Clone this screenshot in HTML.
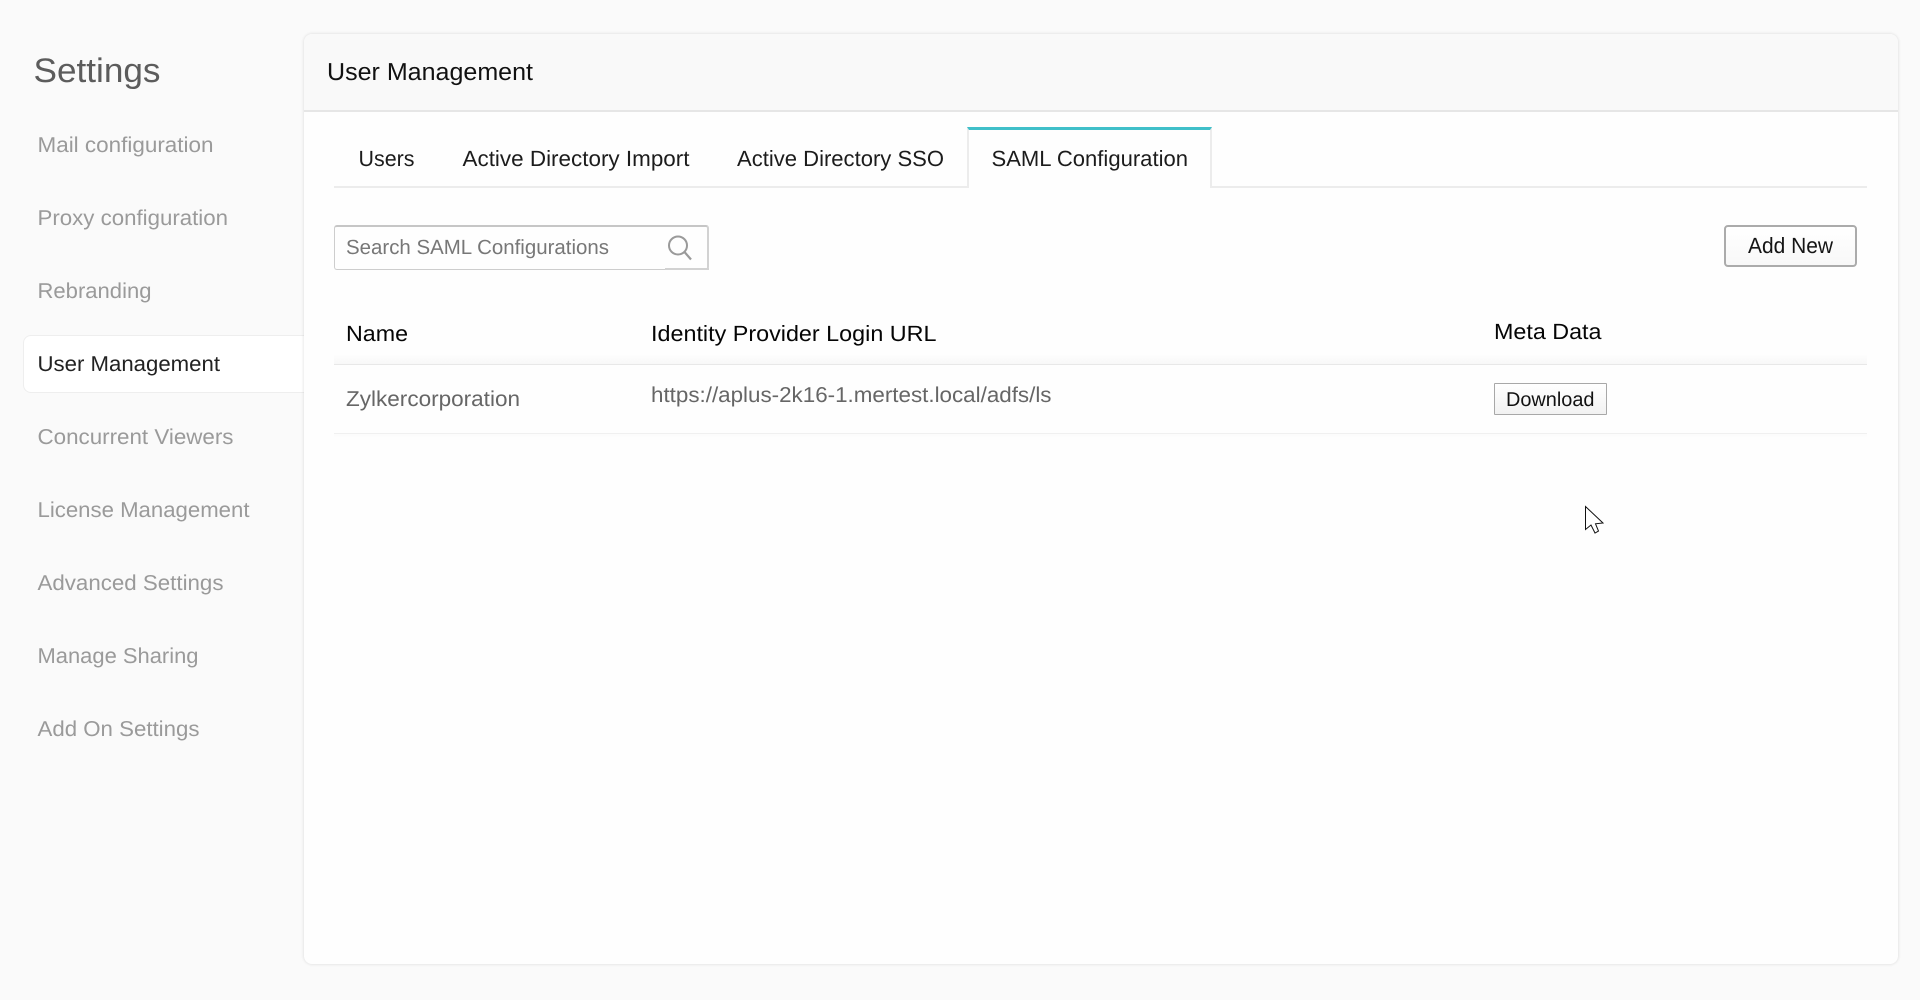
<!DOCTYPE html>
<html lang="en">
<head>
<meta charset="utf-8">
<title>Settings - User Management</title>
<style>
html,body{margin:0;padding:0;width:1920px;height:1000px;overflow:hidden;background:#fafafa;}
.b{position:absolute;box-sizing:border-box;}
svg{position:absolute;left:0;top:0;}
text{font-family:"Liberation Sans",sans-serif;text-rendering:geometricPrecision;}
.m{font-size:21.5px;fill:#9a9a9a;}
.t{font-size:22px;fill:#1c1c1c;}
.h{font-size:22px;fill:#050505;}
</style>
</head>
<body>
<!-- active sidebar pill -->
<div class="b" style="left:23px;top:335px;width:291px;height:58px;background:#fff;border:1px solid #eee;border-right:0;border-radius:8px 0 0 8px;"></div>
<!-- card -->
<div class="b" style="left:304px;top:34px;width:1594px;height:930px;background:#fefefe;border-radius:8px;box-shadow:0 0 3px rgba(0,0,0,.14);"></div>
<div class="b" style="left:304px;top:34px;width:1594px;height:78px;background:#f9f9f9;border-bottom:2px solid #e6e6e6;border-radius:8px 8px 0 0;"></div>
<!-- tabs -->
<div class="b" style="left:334px;top:186px;width:1533px;height:2px;background:#ececec;"></div>
<div class="b" style="left:967px;top:127px;width:245px;height:61px;background:#fefefe;border:2px solid #ececec;border-top:3px solid #3fbfc9;border-bottom:0;"></div>
<!-- search -->
<div class="b" style="left:334px;top:225px;width:375px;height:45px;border:1px solid #cdcdcd;border-top:2px solid #c6c6c6;border-right:2px solid #d2d2d2;border-radius:3px;"></div>
<div class="b" style="left:665px;top:268px;width:44px;height:2px;background:#d2d2d2;"></div>
<!-- add new -->
<div class="b" style="left:1724px;top:225px;width:133px;height:42px;background:linear-gradient(#fff,#f8f8f8);border:2px solid #ababab;border-radius:4px;"></div>
<!-- table -->
<div class="b" style="left:334px;top:354px;width:1533px;height:10px;background:linear-gradient(#fefefe,#f8f8f8);"></div>
<div class="b" style="left:334px;top:364px;width:1533px;height:1px;background:#e8e8e8;"></div>
<div class="b" style="left:334px;top:433px;width:1533px;height:1px;background:#f0f0f0;"></div>
<div class="b" style="left:334px;top:434px;width:1533px;height:4px;background:linear-gradient(#fbfbfb,#fefefe);"></div>
<div class="b" style="left:1494px;top:383px;width:113px;height:32px;background:linear-gradient(#fff,#f2f2f2);border:1px solid #a8a8a8;border-radius:1px;"></div>

<svg width="1920" height="1000" viewBox="0 0 1920 1000" xmlns="http://www.w3.org/2000/svg">
<text x="33.5" y="82" font-size="34" fill="#5c5c5c" textLength="127" lengthAdjust="spacingAndGlyphs">Settings</text>
<text class="m" x="37.5" y="152" textLength="176" lengthAdjust="spacingAndGlyphs">Mail configuration</text>
<text class="m" x="37.5" y="225" textLength="190.5" lengthAdjust="spacingAndGlyphs">Proxy configuration</text>
<text class="m" x="37.5" y="298" textLength="114" lengthAdjust="spacingAndGlyphs">Rebranding</text>
<text class="m" x="37.5" y="371" textLength="182.5" lengthAdjust="spacingAndGlyphs" style="fill:#222">User Management</text>
<text class="m" x="37.5" y="444" textLength="196" lengthAdjust="spacingAndGlyphs">Concurrent Viewers</text>
<text class="m" x="37.5" y="517" textLength="212" lengthAdjust="spacingAndGlyphs">License Management</text>
<text class="m" x="37.5" y="590" textLength="186" lengthAdjust="spacingAndGlyphs">Advanced Settings</text>
<text class="m" x="37.5" y="663" textLength="161" lengthAdjust="spacingAndGlyphs">Manage Sharing</text>
<text class="m" x="37.5" y="736" textLength="162" lengthAdjust="spacingAndGlyphs">Add On Settings</text>

<text x="327" y="80" font-size="24.5" fill="#111" textLength="206" lengthAdjust="spacingAndGlyphs">User Management</text>

<text class="t" x="358.5" y="166" textLength="56" lengthAdjust="spacingAndGlyphs">Users</text>
<text class="t" x="462.5" y="166" textLength="227" lengthAdjust="spacingAndGlyphs">Active Directory Import</text>
<text class="t" x="737" y="166" textLength="207" lengthAdjust="spacingAndGlyphs">Active Directory SSO</text>
<text class="t" x="991.5" y="166" textLength="196.5" lengthAdjust="spacingAndGlyphs">SAML Configuration</text>

<text x="346" y="254" font-size="20.5" fill="#777" textLength="263" lengthAdjust="spacingAndGlyphs">Search SAML Configurations</text>
<circle cx="678" cy="245.5" r="9" fill="none" stroke="#9a9a9a" stroke-width="2"/>
<path d="M684.5 252 L691 259.5" fill="none" stroke="#9a9a9a" stroke-width="2.2"/>

<text x="1748" y="253" font-size="22" fill="#151515" textLength="85" lengthAdjust="spacingAndGlyphs">Add New</text>

<text class="h" x="346" y="341" textLength="62" lengthAdjust="spacingAndGlyphs">Name</text>
<text class="h" x="651" y="341" textLength="285.5" lengthAdjust="spacingAndGlyphs">Identity Provider Login URL</text>
<text class="h" x="1494" y="339" textLength="107.5" lengthAdjust="spacingAndGlyphs">Meta Data</text>

<text x="346" y="406" font-size="21.5" fill="#666" textLength="174" lengthAdjust="spacingAndGlyphs">Zylkercorporation</text>
<text x="651" y="402" font-size="21.5" fill="#666" textLength="400.5" lengthAdjust="spacingAndGlyphs">https://aplus-2k16-1.mertest.local/adfs/ls</text>
<text x="1506" y="406" font-size="20" fill="#111" textLength="88.5" lengthAdjust="spacingAndGlyphs">Download</text>

<path d="M1585.5 506.5 L1585.5 529.5 L1591 525 L1595 533 L1598.5 531 L1595.5 523.8 L1603 523 Z" fill="#fff" stroke="#111" stroke-width="1"/>
</svg>
</body>
</html>
